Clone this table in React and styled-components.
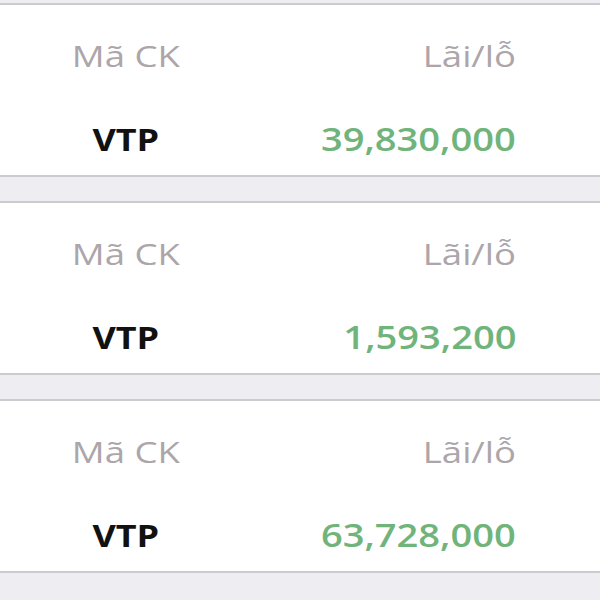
import React from 'react'
import styled, { createGlobalStyle } from 'styled-components'

const GlobalStyle = createGlobalStyle`
  html, body {
    margin: 0;
    padding: 0;
    background: #eeedf2;
  }
  body {
    font-family: "Open Sans", "Liberation Sans", sans-serif;
  }
`

const List = styled.div`
  width: 600px;
  height: 600px;
  overflow: hidden;
  padding-top: 3px;
  box-sizing: border-box;
  background: #eeedf2;
`

const Card = styled.div`
  background: #fff;
  border-top: 2px solid #cbcacf;
  border-bottom: 2px solid #cbcacf;
  margin-bottom: 24px;
  height: 174px;
  box-sizing: border-box;
  display: grid;
  grid-template-columns: 252px 1fr;
  grid-template-rows: 40px 40px;
  row-gap: 43px;
  padding-top: 31px;
`

const Cell = styled.div`
  line-height: 40px;
  text-align: ${p => (p.$right ? 'right' : 'center')};
  padding-right: ${p => (p.$right ? '84px' : '0')};
`

// the screenshot is stretched sideways a little, so the glyphs are widened
const Wide = styled.span`
  display: inline-block;
  transform: scaleX(${p => p.$scale || 1.2});
  transform-origin: ${p => (p.$right ? 'right' : 'center')} center;
`

const Label = styled(Wide)`
  font-size: 29px;
  color: #aca6aa;
`

const Code = styled(Wide)`
  font-size: 31px;
  font-weight: 700;
  color: #111;
`

const Profit = styled(Wide)`
  font-size: 32px;
  font-weight: 600;
  color: #70b47c;
`

const rows = [
  { code: 'VTP', profit: '39,830,000' },
  { code: 'VTP', profit: '1,593,200' },
  { code: 'VTP', profit: '63,728,000' },
]

export default function App() {
  return (
    <>
      <GlobalStyle />
      <List>
        {rows.map((r, i) => (
          <Card key={i}>
            <Cell><Label $scale={1.26}>Mã CK</Label></Cell>
            <Cell $right><Label $right $scale={1.26}>Lãi/lỗ</Label></Cell>
            <Cell><Code $scale={1.16}>{r.code}</Code></Cell>
            <Cell $right><Profit $right $scale={1.19}>{r.profit}</Profit></Cell>
          </Card>
        ))}
      </List>
    </>
  )
}
